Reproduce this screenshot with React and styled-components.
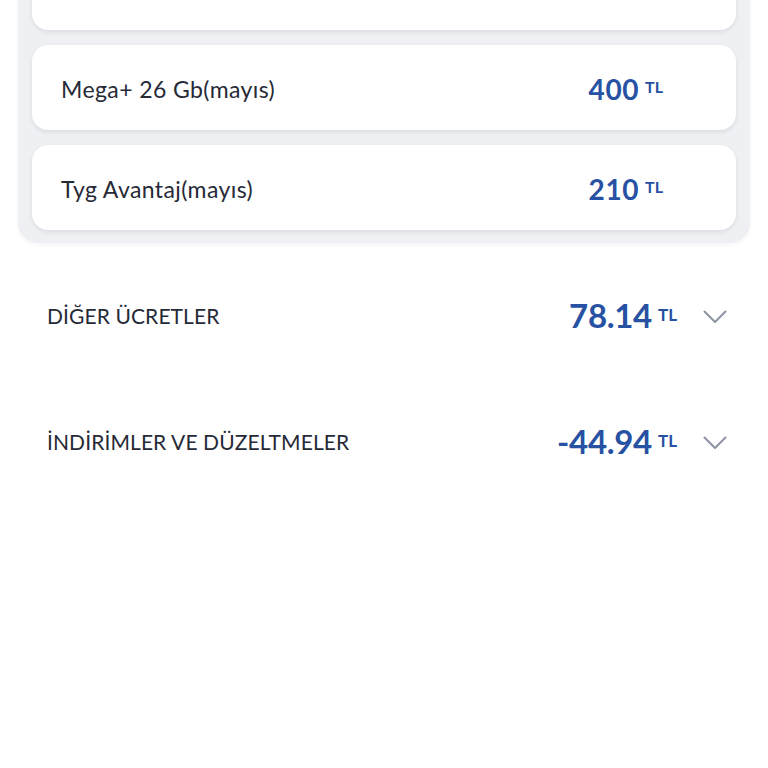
import React from 'react'
import styled, { createGlobalStyle } from 'styled-components'

const GlobalStyle = createGlobalStyle`
  html, body {
    margin: 0;
    padding: 0;
    background: #ffffff;
  }
  body {
    font-family: Lato, "Noto Sans", sans-serif;
    color: #262a36;
  }
`

const Page = styled.div`
  margin-top: -69px;
  padding: 0 18px;
`

const Panel = styled.div`
  background: #eef0f3;
  border-radius: 0 0 20px 20px;
  padding: 14px 14px 13px 14px;
  display: flex;
  flex-direction: column;
  gap: 15px;
  box-shadow: 0 2px 4px rgba(20, 30, 60, 0.04);
`

const Card = styled.div`
  height: 85px;
  box-sizing: border-box;
  background: #ffffff;
  border-radius: 16px;
  padding: ${p => (p.$lift ? '0 73px 1px 29px' : '2px 73px 0 29px')};
  display: flex;
  align-items: center;
  justify-content: space-between;
  box-shadow: 0 2px 4px rgba(30, 40, 70, 0.1);
`

const CardTitle = styled.span`
  font-size: 23px;
  font-weight: 400;
  letter-spacing: 0.4px;
  color: #262a36;
`

const Amount = styled.span`
  display: inline-flex;
  align-items: flex-start;
  color: #2751a3;
  font-weight: 700;
`

const Value = styled.span`
  font-size: ${p => (p.$big ? '33px' : '28px')};
  line-height: 1;
  letter-spacing: ${p => (p.$big ? '-0.3px' : '0.6px')};
`

const Currency = styled.span`
  font-size: ${p => (p.$big ? '17px' : '16px')};
  line-height: 1;
  margin-left: 6px;
  margin-top: ${p => (p.$big ? '7px' : '4px')};
`

const Rows = styled.div`
  display: flex;
  flex-direction: column;
  gap: 66px;
  margin-top: 42px;
  padding: 0 23px 0 29px;
`

const Row = styled.div`
  height: 60px;
  display: flex;
  align-items: center;
  justify-content: space-between;
`

const RowTitle = styled.span`
  font-size: 21px;
  font-weight: 400;
  color: #262a36;
  letter-spacing: 0.1px;
`

const RowRight = styled.div`
  display: flex;
  align-items: center;
  gap: 26px;
`

const ChevronIcon = styled.svg`
  margin-top: 3px;
`

const Chevron = () => (
  <ChevronIcon width="24" height="14" viewBox="0 0 24 14" fill="none">
    <polyline points="1.5,1.5 12,12 22.5,1.5" stroke="#8d93a3" strokeWidth="2" strokeLinecap="round" strokeLinejoin="round" />
  </ChevronIcon>
)

const items = [
  { title: 'Konuşma Hakkı 1000 DK Ağ İçi', amount: '120', lift: true },
  { title: 'Mega+ 26 Gb(mayıs)', amount: '400' },
  { title: 'Tyg Avantaj(mayıs)', amount: '210' },
]

const sections = [
  { title: 'DİĞER ÜCRETLER', amount: '78.14' },
  { title: 'İNDİRİMLER VE DÜZELTMELER', amount: '-44.94' },
]

export default function App() {
  return (
    <>
      <GlobalStyle />
      <Page>
        <Panel>
          {items.map(item => (
            <Card key={item.title} $lift={item.lift}>
              <CardTitle>{item.title}</CardTitle>
              <Amount>
                <Value>{item.amount}</Value>
                <Currency>TL</Currency>
              </Amount>
            </Card>
          ))}
        </Panel>
        <Rows>
          {sections.map(s => (
            <Row key={s.title}>
              <RowTitle>{s.title}</RowTitle>
              <RowRight>
                <Amount>
                  <Value $big>{s.amount}</Value>
                  <Currency $big>TL</Currency>
                </Amount>
                <Chevron />
              </RowRight>
            </Row>
          ))}
        </Rows>
      </Page>
    </>
  )
}
